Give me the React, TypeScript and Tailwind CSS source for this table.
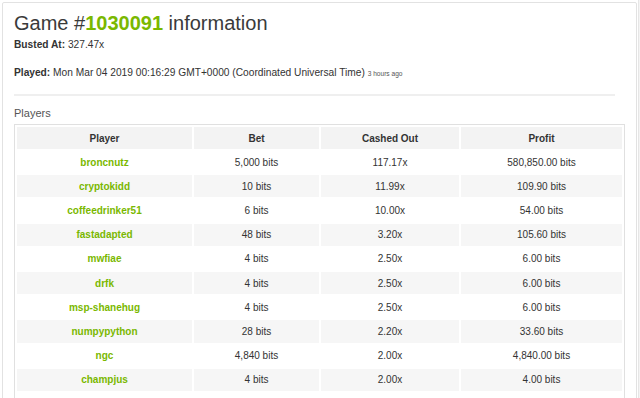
const players = [
  { name: 'broncnutz', bet: '5,000 bits', cashed: '117.17x', profit: '580,850.00 bits' },
  { name: 'cryptokidd', bet: '10 bits', cashed: '11.99x', profit: '109.90 bits' },
  { name: 'coffeedrinker51', bet: '6 bits', cashed: '10.00x', profit: '54.00 bits' },
  { name: 'fastadapted', bet: '48 bits', cashed: '3.20x', profit: '105.60 bits' },
  { name: 'mwfiae', bet: '4 bits', cashed: '2.50x', profit: '6.00 bits' },
  { name: 'drfk', bet: '4 bits', cashed: '2.50x', profit: '6.00 bits' },
  { name: 'msp-shanehug', bet: '4 bits', cashed: '2.50x', profit: '6.00 bits' },
  { name: 'numpypython', bet: '28 bits', cashed: '2.20x', profit: '33.60 bits' },
  { name: 'ngc', bet: '4,840 bits', cashed: '2.00x', profit: '4,840.00 bits' },
  { name: 'champjus', bet: '4 bits', cashed: '2.00x', profit: '4.00 bits' },
];

export default function App() {
  return (
    <div className="h-[398px] overflow-hidden bg-white flex font-['Liberation_Sans',Arial,sans-serif] text-[#333]">
      <div className="ml-[2px] mt-[2px] w-[635px] h-[420px] border border-[#e2e2e2] rounded-[2px] px-[11px] pt-[8px] shrink-0">
        <h1 className="text-[20px] leading-[24px] font-normal text-[#3a3a3a]">
          Game #<span className="text-[#7ab800] font-bold">1030091</span> information
        </h1>
        <p className="mt-[3px] text-[10.2px] leading-[14px]">
          <b>Busted At:</b> 327.47x
        </p>
        <p className="mt-[14px] text-[10.2px] leading-[14px]">
          <b>Played:</b> Mon Mar 04 2019 00:16:29 GMT+0000 (Coordinated Universal Time){' '}
          <span className="text-[6.6px] text-[#555]">3 hours ago</span>
        </p>
        <div className="mt-[13px] mr-[10px] h-[2px] bg-[#efefef]" />
        <p className="mt-[10px] text-[11px] leading-[14px] text-[#555]">Players</p>
        <table className="mt-[4px] w-[611px] border-separate border-spacing-[2px] border border-[#e0e0e0] text-[10px] text-center">
          <thead>
            <tr>
              <th className="w-[175px] h-[22px] bg-[#f3f3f3] font-bold">Player</th>
              <th className="w-[125px] bg-[#f3f3f3] font-bold">Bet</th>
              <th className="w-[138px] bg-[#f3f3f3] font-bold">Cashed Out</th>
              <th className="bg-[#f3f3f3] font-bold">Profit</th>
            </tr>
          </thead>
          <tbody>
            {players.map((p, i) => (
              <tr key={p.name} className={i % 2 === 1 ? 'bg-[#f6f6f6]' : 'bg-white'}>
                <td className="h-[22.2px] font-bold text-[#7ab800]">{p.name}</td>
                <td>{p.bet}</td>
                <td>{p.cashed}</td>
                <td>{p.profit}</td>
              </tr>
            ))}
            <tr className="bg-white">
              <td className="h-[22.2px]" />
              <td />
              <td />
              <td />
            </tr>
          </tbody>
        </table>
      </div>
      <div className="flex-1 bg-[#f4f4f4] border-l border-[#e6e6e6] ml-[1px]" />
    </div>
  );
}
